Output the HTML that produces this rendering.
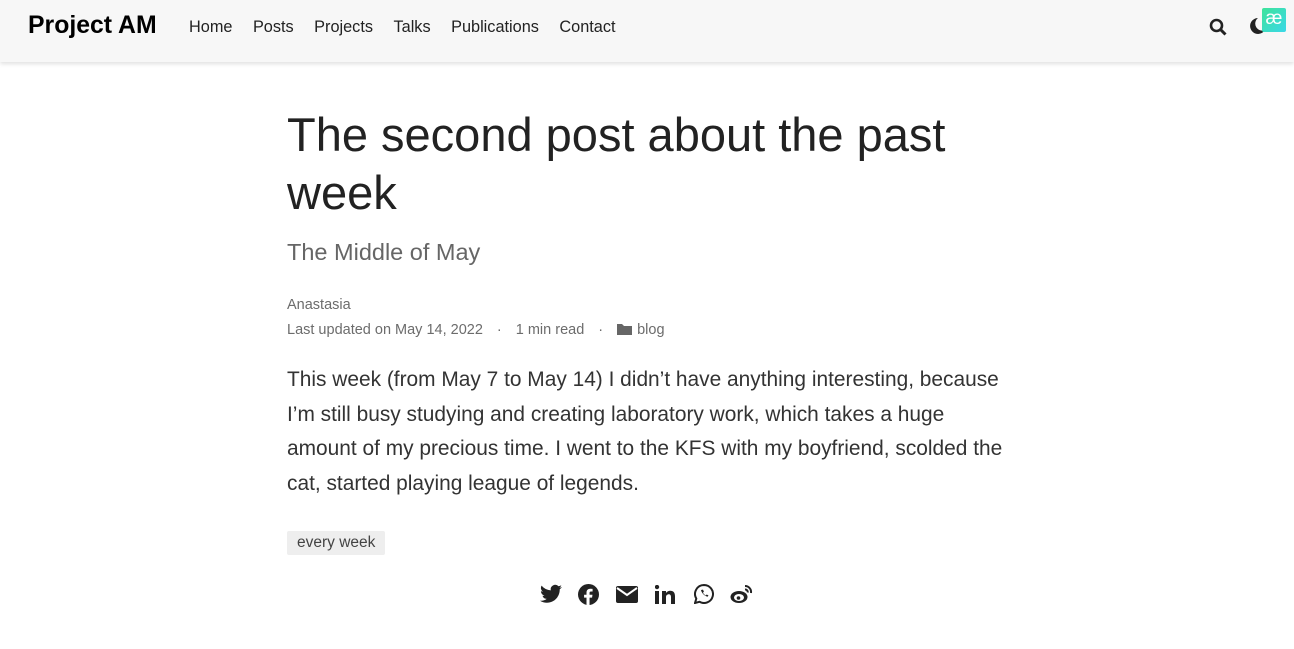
<!DOCTYPE html>
<html><head><meta charset="utf-8"><style>
body{margin:0;background:#fff;font-family:"Liberation Sans",Arial,sans-serif;color:#2b2b2b;width:1294px;height:649px;overflow:hidden;position:relative}
.nav{position:absolute;left:0;top:0;width:1294px;height:62px;background:#f7f7f7;box-shadow:0 2px 4px rgba(0,0,0,.12)}
.brand{position:absolute;left:28px;top:12px;font-size:24.8px;font-weight:bold;color:#000}
.links{position:absolute;left:189px;top:18px;font-size:16.3px;color:#222}
.links span{margin-right:20.5px}
.main{position:absolute;left:287px;width:740px}
h1{position:absolute;left:287px;top:106px;margin:0;font-size:47px;font-weight:normal;line-height:58px;width:720px;color:#222}
.sub{top:239px;font-size:23.5px;color:#666}
.meta{font-size:14.5px;color:#6c6c6c}
.dot{margin:0 14px}
.body{top:363px;font-size:20.9px;line-height:34.6px;color:#333;width:730px}
.tag{position:absolute;left:287px;top:531px;background:#eee;padding:3px 10px;font-size:15.5px;color:#444;border-radius:2px}
.share{position:absolute;top:584px;left:540px}
.share svg{position:absolute;top:0}
</style></head><body>
<div class="nav"><div class="brand">Project AM</div>
<div class="links"><span>Home</span><span>Posts</span><span>Projects</span><span>Talks</span><span>Publications</span><span>Contact</span></div>
<svg style="position:absolute;left:1209px;top:18px" width="18" height="18" viewBox="0 0 18 18"><circle cx="7.5" cy="7.5" r="5.5" fill="none" stroke="#222" stroke-width="2.6"/><path d="M11.5 11.5L16.5 16.5" stroke="#222" stroke-width="3"/></svg>
<svg style="position:absolute;left:1248px;top:17px" width="18" height="18" viewBox="0 0 18 18"><path d="M10 1A8 8 0 1 0 17 13 7 7 0 0 1 10 1Z" fill="#222"/></svg>
<div style="position:absolute;left:1262px;top:8px;width:24px;height:24px;background:linear-gradient(135deg,#3ee39a,#3ad8e8);border-radius:2px;color:#fff;font-size:19px;text-align:center;line-height:22px">æ</div>
</div>
<h1>The second post about the past week</h1>
<div class="main sub">The Middle of May</div>
<div class="main meta" style="top:297px">Anastasia</div>
<div class="main meta" style="top:322px">Last updated on May 14, 2022<span class="dot">·</span>1 min read<span class="dot">·</span><svg width="15" height="12" viewBox="0 0 15 12" style="vertical-align:-1px"><path d="M0 1h5l2 2h8v9H0z" fill="#666"/></svg><span style="margin-left:5px">blog</span></div>
<div class="main body">This week (from May 7 to May 14) I didn’t have anything interesting, because I’m still busy studying and creating laboratory work, which takes a huge amount of my precious time. I went to the KFS with my boyfriend, scolded the cat, started playing league of legends.</div>
<div class="tag">every week</div>
<div class="share">
<svg style="left:0" width="22" height="20" viewBox="0 0 24 20"><path d="M24 2.4a10 10 0 0 1-2.8.8A5 5 0 0 0 23.3.4a10 10 0 0 1-3.1 1.2A4.9 4.9 0 0 0 11.8 6 14 14 0 0 1 1.7.9a4.9 4.9 0 0 0 1.5 6.6A5 5 0 0 1 1 6.9a4.9 4.9 0 0 0 3.9 4.9 5 5 0 0 1-2.2.1 4.9 4.9 0 0 0 4.6 3.4A9.9 9.9 0 0 1 0 17.3 14 14 0 0 0 7.5 19.5c9 0 14-7.5 14-14v-.6A10 10 0 0 0 24 2.4z" fill="#222"/></svg>
<svg style="left:38px" width="21" height="21" viewBox="0 0 20 20"><circle cx="10" cy="10" r="10" fill="#222"/><path d="M11 20v-7h2.4l.4-2.8H11V8.5c0-.8.3-1.4 1.4-1.4h1.5V4.6a19 19 0 0 0-2.2-.1c-2.2 0-3.6 1.3-3.6 3.7v2H5.8V13h2.3v7z" fill="#fff"/></svg>
<svg style="left:76px;top:2px" width="22" height="17" viewBox="0 0 22 17"><rect width="22" height="17" rx="2" fill="#222"/><path d="M1 2l10 7 10-7" fill="none" stroke="#fff" stroke-width="2"/></svg>
<svg style="left:115px;top:1px" width="20" height="19" viewBox="0 0 20 19"><rect x="0" y="6" width="4" height="13" fill="#222"/><circle cx="2" cy="2" r="2.2" fill="#222"/><path d="M7 6h4v2c1-1.5 2.5-2.3 4.3-2.3 3 0 4.7 1.8 4.7 5.5V19h-4v-7c0-1.8-.7-2.8-2.2-2.8S11 10.3 11 12v7H7z" fill="#222"/></svg>
<svg style="left:154px" width="20" height="20" viewBox="0 0 20 20"><path d="M10 1a9 9 0 0 0-7.7 13.6L1 19l4.5-1.2A9 9 0 1 0 10 1z" fill="none" stroke="#222" stroke-width="2"/><path d="M7 6c.5 2.8 3 5.5 6.5 6.8l1-1.3-1.8-1-.9 1C10.5 10.8 9.4 9.7 9 8.6l.9-1-.9-2z" fill="#222"/></svg>
<svg style="left:190px" width="23" height="20" viewBox="0 0 23 20"><ellipse cx="9" cy="13" rx="8.5" ry="6" fill="#222"/><ellipse cx="9" cy="13.5" rx="5" ry="3.5" fill="#fff"/><circle cx="8.5" cy="14" r="1.8" fill="#222"/><path d="M15 2a6 6 0 0 1 6 7M15 5.5a2.5 2.5 0 0 1 2.7 3" fill="none" stroke="#222" stroke-width="2"/></svg>
</div>
</body></html>
